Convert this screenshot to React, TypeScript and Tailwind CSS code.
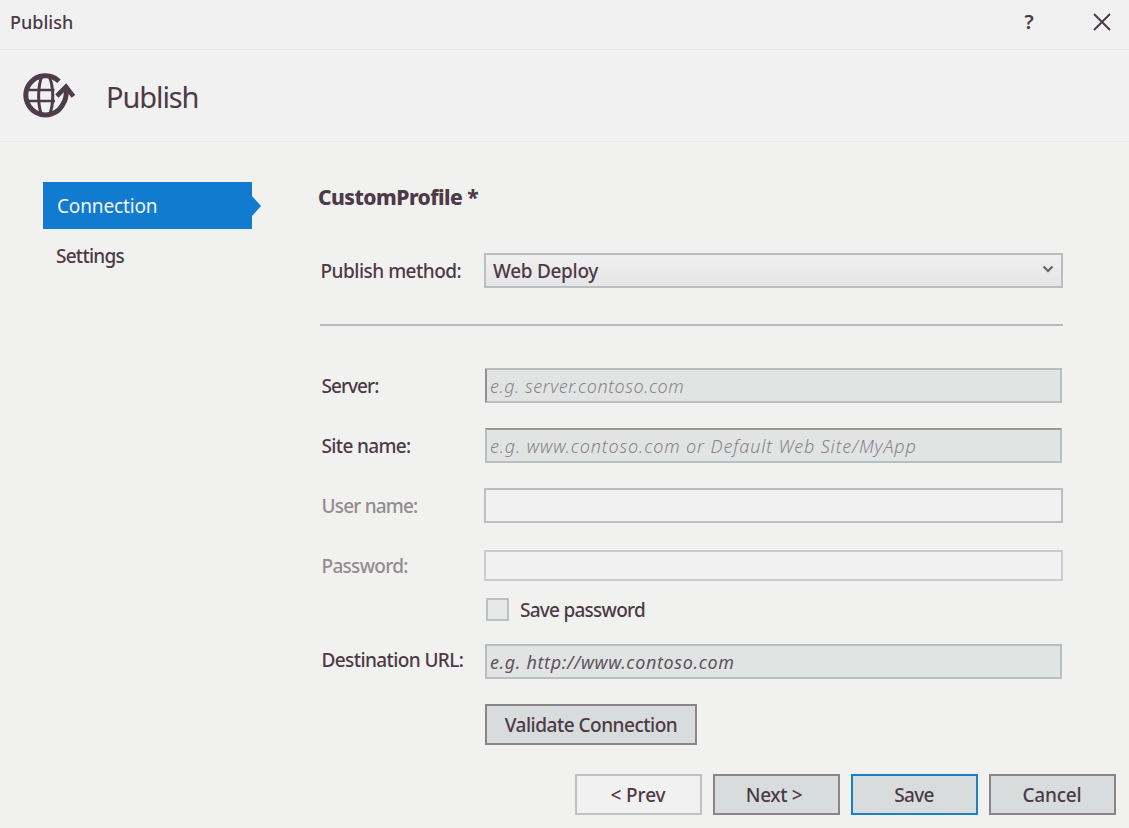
import type { ReactNode } from 'react';

function Label({ children, className }: { children: ReactNode; className: string }) {
  return <span className={`block w-[164px] shrink-0 whitespace-nowrap pl-[1.5px] ${className}`}>{children}</span>;
}

function Field({ label, labelClass, inputClass, rowClass, children }: {
  label: string; labelClass: string; inputClass: string; rowClass: string; children?: ReactNode;
}) {
  return (
    <div className={`flex items-center ${rowClass}`}>
      <Label className={labelClass}>{label}</Label>
      <div className={`flex flex-1 items-center whitespace-nowrap border-2 border-[#b9bec1] ${inputClass}`}>{children}</div>
    </div>
  );
}

function Button({ children, className }: { children: ReactNode; className: string }) {
  return <button className={`flex items-center justify-center whitespace-nowrap border-2 ${className}`}>{children}</button>;
}

function PublishIcon() {
  return (
    <svg width="54" height="48" viewBox="0 0 54 48" fill="none" stroke="#4e3d48" className="block">
      <path d="M37 9.2A19.6 19.6 0 1 0 41.5 31Q44.5 27 44.5 16" strokeWidth="5" />
      <path d="M4 18H32.5M4 29H33" strokeWidth="2.6" />
      <path d="M20 4C15.5 15 15.5 33 20 44M27 4C32 15 32 33 27 44" strokeWidth="3" />
      <path d="M34.8 24L44 14.8L51.4 24.4" strokeWidth="4.6" />
    </svg>
  );
}

export default function App() {
  return (
    <div className="flex h-[828px] w-[1129px] flex-col overflow-hidden bg-[#f1f1ef] font-['Noto_Sans','Open_Sans',sans-serif] text-[19px] font-medium leading-6 text-[#4c3a47]">
      <header className="flex h-[50px] items-center border-b border-[#e8e8e8] bg-[#f1f1f1] pb-1.5 pl-2.5 pr-[18px]">
        <h1 className="flex-1 text-[18px]">Publish</h1>
        <button className="w-[14px] text-[20px] font-semibold">?</button>
        <button className="ml-[57px]">
          <svg width="18" height="18" viewBox="0 0 18 18" fill="none" stroke="#4c3a47" strokeWidth="2" className="block">
            <path d="M1 1L17 17M17 1L1 17" />
          </svg>
        </button>
      </header>

      <div className="flex h-[92px] items-center gap-[30px] border-b border-[#e8e8e8] bg-[#f1f1f1] pl-[22px]">
        <PublishIcon />
        <h2 className="pt-0.5 text-[29px] font-normal leading-9 tracking-[-1.1px]">Publish</h2>
      </div>

      <div className="flex h-[632px] pl-[43px] pr-[66px] pt-10">
        <nav className="w-[219px] shrink-0">
          <div className="flex h-[47px] items-center">
            <div className="flex h-full w-[209px] items-center bg-[#107bcf] pl-[14px] font-normal tracking-[-0.15px] text-[#f4f4f4]">Connection</div>
            <svg width="9" height="20" viewBox="0 0 9 20" className="block" fill="#107bcf"><path d="M0 0L9 10L0 20Z" /></svg>
          </div>
          <div className="mt-[15px] pl-[13px] tracking-[-0.75px]">Settings</div>
        </nav>

        <main className="ml-[58px] flex flex-1 flex-col">
          <h3 className="-ml-0.5 mt-0.5 whitespace-nowrap text-[21px] font-extrabold leading-[26px] tracking-[-0.52px]">CustomProfile *</h3>

          <Field label="Publish method:" labelClass="tracking-[-0.5px] -indent-px" rowClass="mt-[43px]" inputClass="h-[35px] justify-between bg-linear-to-b from-[#f0f0f0] to-[#e5e5e6] pl-[7px] pr-[7px] tracking-[-0.3px]">
            <span>Web Deploy</span>
            <svg width="12" height="9" viewBox="0 0 12 9" fill="none" stroke="#6b5f68" strokeWidth="2.2" className="mb-0.5 block">
              <path d="M1.5 1.5L6 6L10.5 1.5" />
            </svg>
          </Field>

          <div className="mt-9 h-0.5 bg-[#b4babd]" />

          <Field label="Server:" labelClass="tracking-[-0.95px]" rowClass="mt-[42px]" inputClass="mx-px h-[35px] border-l-[#948d92] bg-[#e2e4e4] pl-[3px] text-[18px] font-light italic tracking-[0.55px] text-[#88838a]">e.g. server.contoso.com</Field>
          <Field label="Site name:" labelClass="tracking-[-0.65px]" rowClass="mt-[25px]" inputClass="mx-px h-[35px] border-t-[#9a9799] bg-[#e2e4e4] pl-[3px] text-[18px] font-light italic tracking-[0.87px] text-[#88838a]">e.g. www.contoso.com or Default Web Site/MyApp</Field>
          <Field label="User name:" labelClass="tracking-[-0.8px] text-[#918c90]" rowClass="mt-[25px]" inputClass="h-[35px] bg-[#f1f1f1]" />
          <Field label="Password:" labelClass="tracking-[-0.7px] text-[#918c90]" rowClass="mt-[27px]" inputClass="h-[31px] border-[#c9cdcf] bg-[#f1f1f1]" />

          <div className="mt-[17px] flex h-[23px] items-center pl-[166px]">
            <span className="mr-[11px] size-[23px] border-2 border-[#bcc0c3] bg-[#e6e7e7]" />
            <span className="tracking-[-0.75px]">Save password</span>
          </div>

          <Field label="Destination URL:" labelClass="pb-[3px] tracking-[-0.6px]" rowClass="mt-[23px]" inputClass="mx-px h-[35px] bg-[#e2e4e4] pl-[3px] text-[18px] font-normal italic tracking-[0.62px] text-[#5f5360]">e.g. http://www.contoso.com</Field>

          <Button className="ml-[165px] mt-[25px] h-[41px] w-[212px] border-[#8d8489] bg-[#d8dcdd] tracking-[-0.5px]">Validate Connection</Button>
        </main>
      </div>

      <footer className="flex h-[54px] justify-end gap-[11px] pr-[13.5px]">
        <Button className="h-[41px] w-[127px] border-[#bcc1c4] bg-[#f1f1f1] tracking-[-0.1px]">&lt; Prev</Button>
        <Button className="h-[41px] w-[127px] border-[#8d8489] bg-[#d8dcdd] pr-2.5 pl-1.5 tracking-[-0.4px]">Next &gt;</Button>
        <Button className="h-[41px] w-[127px] border-[#1b80cc] bg-[#d8dcdd] tracking-[-0.7px]">Save</Button>
        <Button className="h-[41px] w-[127px] border-[#8d8489] bg-[#d8dcdd] tracking-[-0.2px]">Cancel</Button>
      </footer>
    </div>
  );
}
